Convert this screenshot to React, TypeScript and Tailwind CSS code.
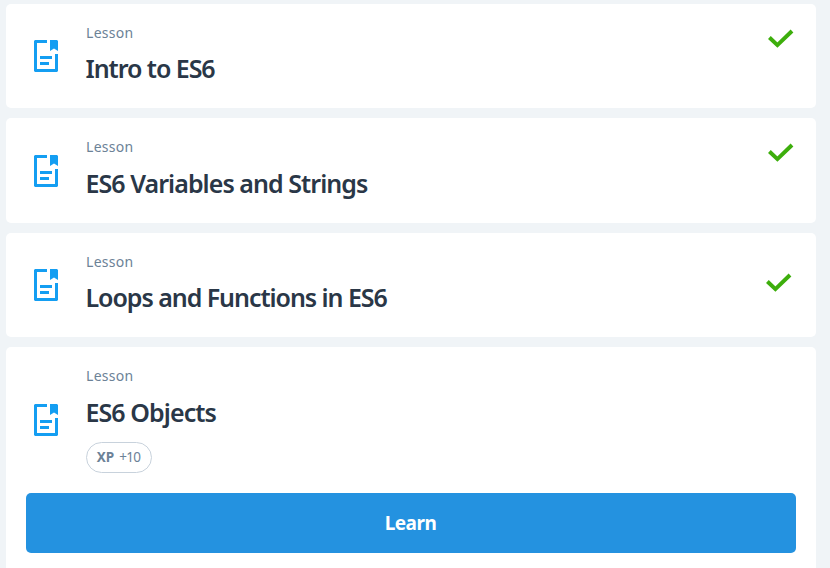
function LessonIcon() {
  return (
    <svg width="24" height="32" viewBox="0 0 24 32" fill="#149ef2" className="shrink-0">
      <path d="M1 0H13V3H3V29H21V14H24V31L23 32H1L0 31V1Z" />
      <path d="M16 0H23L24 1V11L20 8.5L16 11Z" />
      <path d="M6 16H18V19H6ZM6 22H15V25H6Z" />
    </svg>
  );
}

function Check() {
  return (
    <svg width="26" height="20" viewBox="0 0 26 20" fill="none" stroke="#3dae0c" strokeWidth="4">
      <path d="M1.4 8.5L9.4 16.1L24 2" />
    </svg>
  );
}

type HeadProps = { title: string; tracking: string };

function Heading({ title, tracking }: HeadProps) {
  return (
    <div className="flex flex-col items-start whitespace-nowrap">
      <span className="text-[14px] leading-[20px] tracking-[0.3px] text-[#6c8297]">Lesson</span>
      <h2 className={`mt-[9.35px] -ml-[0.5px] text-[25px] leading-[32px] font-semibold text-[#2a3747] ${tracking}`}>{title}</h2>
    </div>
  );
}

const lessons = [
  { title: "Intro to ES6", tracking: "tracking-[-1.05px]", check: "pt-[25px] pr-[22px]" },
  { title: "ES6 Variables and Strings", tracking: "tracking-[-0.95px]", check: "pt-[24.6px] pr-[22px]" },
  { title: "Loops and Functions in ES6", tracking: "tracking-[-1.05px]", check: "pt-[40.2px] pr-[24px]" },
];

export default function App() {
  return (
    <main className="flex h-[568px] w-[830px] flex-col gap-[10px] overflow-hidden bg-[#f0f4f7] pt-1 pr-[14px] pl-[6px] font-['Noto_Sans',sans-serif]">
      {lessons.map((l) => (
        <section key={l.title} className="flex h-[104.4px] shrink-0 rounded-[5px] bg-white pl-7">
          <div className="flex w-[52px] items-center">
            <LessonIcon />
          </div>
          <div className="flex-1 pt-[19px]">
            <Heading title={l.title} tracking={l.tracking} />
          </div>
          <div className={l.check}>
            <Check />
          </div>
        </section>
      ))}
      <section className="h-[240px] shrink-0 rounded-[5px] bg-white px-5">
        <div className="flex h-[145.8px] pl-2">
          <div className="flex w-[52px] items-center">
            <LessonIcon />
          </div>
          <div className="pt-[19px]">
            <Heading title="ES6 Objects" tracking="tracking-[-0.92px]" />
            <div className="mt-[14.65px] flex h-[31px] w-[66px] items-center justify-center gap-[5px] rounded-full border border-[#c8d2dc] pr-px pb-px text-[13.5px] text-[#6c8297]">
              <span className="font-bold">XP</span>
              <span className="tracking-[-0.7px]">+10</span>
            </div>
          </div>
        </div>
        <button className="flex h-[60px] w-full items-center justify-center rounded-[5px] bg-[#2492e0] pr-px text-[19px] font-bold tracking-[-0.5px] text-white">
          Learn
        </button>
      </section>
    </main>
  );
}
